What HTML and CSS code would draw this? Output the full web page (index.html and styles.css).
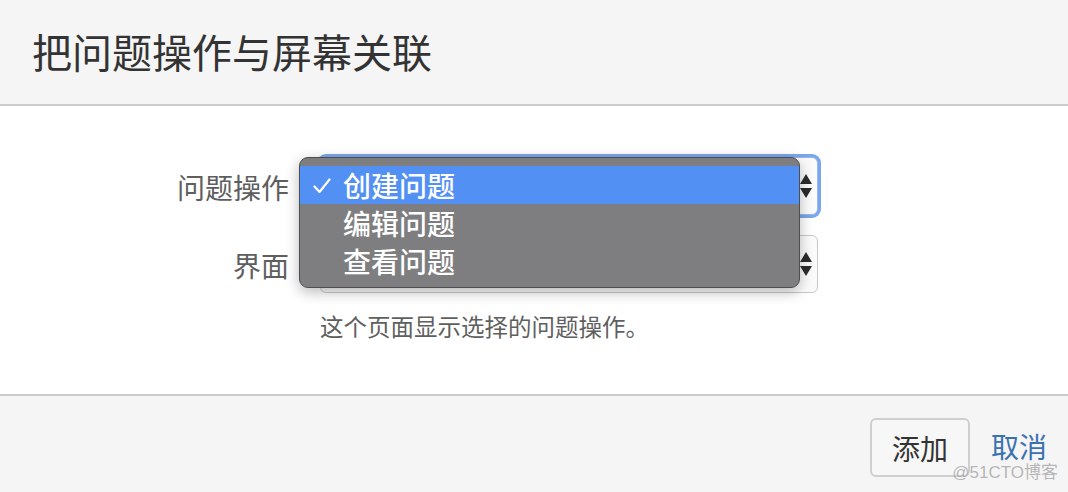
FILE: index.html
```html
<!DOCTYPE html>
<html lang="zh-CN">
<head>
<meta charset="utf-8">
<title>把问题操作与屏幕关联</title>
<link rel="stylesheet" href="styles.css">
</head>
<body>
<div class="dialog">
  <header class="dlg-header">
    <h2 class="dlg-title">把问题操作与屏幕关联</h2>
  </header>
  <main class="dlg-body">
    <div class="form">
      <label class="lbl">问题操作</label>
      <div class="field field-top">
        <div class="select focused">
          <svg class="arrows" width="12" height="26" viewBox="0 0 12 26"><path d="M0 11 L6 1 L12 11 Z M0 15 L12 15 L6 25 Z" fill="#2b2b2b"/></svg>
        </div>
        <ul class="popup">
          <li class="opt active"><svg class="check" width="18" height="16" viewBox="0 0 18 16"><path d="M1.5 8.5 L6.5 14 L16.5 1.5" fill="none" stroke="#fff" stroke-width="2.2" stroke-linecap="round" stroke-linejoin="round"/></svg><span>创建问题</span></li>
          <li class="opt"><span>编辑问题</span></li>
          <li class="opt"><span>查看问题</span></li>
        </ul>
      </div>
      <label class="lbl">界面</label>
      <div class="field">
        <div class="select">
          <svg class="arrows" width="12" height="26" viewBox="0 0 12 26"><path d="M0 11 L6 1 L12 11 Z M0 15 L12 15 L6 25 Z" fill="#2b2b2b"/></svg>
        </div>
        <div class="help">这个页面显示选择的问题操作。</div>
      </div>
    </div>
  </main>
  <footer class="dlg-footer">
    <button class="btn">添加</button>
    <a class="cancel" href="#">取消</a>
    <span class="watermark">@51CTO博客</span>
  </footer>
</div>
</body>
</html>
```

FILE: styles.css
```css
* { box-sizing: border-box; }
html, body { margin: 0; padding: 0; }
body {
  width: 1068px;
  height: 492px;
  overflow: hidden;
  font-family: "Noto Sans CJK SC", "Liberation Sans", sans-serif;
  background: #fff;
  color: #333;
}
.dialog {
  position: relative;
  display: flex;
  flex-direction: column;
  height: 492px;
}
.dlg-header {
  height: 106px;
  background: #f5f5f5;
  border-bottom: 2px solid #cccccc;
  display: flex;
  align-items: center;
  padding-left: 32px;
}
.dlg-title {
  margin: 0;
  font-size: 40px;
  font-weight: 400;
  line-height: 1;
  color: #333;
  padding-bottom: 2px;
}
.dlg-body {
  height: 288px;
  padding-top: 51px;
}
.form {
  display: grid;
  grid-template-columns: 289px 498px;
  column-gap: 31px;
  row-gap: 20px;
}
.lbl {
  text-align: right;
  font-size: 28px;
  line-height: 58px;
  height: 58px;
  color: #5e5e5e;
  padding-top: 1px;
}
.field {
  position: relative;
}
.field-top {
  z-index: 5;
}
.select {
  height: 58px;
  border: 1px solid #c9c9c9;
  border-radius: 6px;
  background: #fbfbfb;
  display: flex;
  align-items: center;
  justify-content: flex-end;
  padding-right: 5px;
}
.select.focused {
  border-color: #9bb6df;
  box-shadow: 0 0 0 3px #78a6ef;
}
.arrows { display: block; }
.popup {
  position: absolute;
  z-index: 10;
  left: -21px;
  top: 0;
  width: 501px;
  height: 131px;
  margin: 0;
  padding: 8px 0 0;
  list-style: none;
  background: #7e7e80;
  border: 1px solid #4e4e50;
  border-radius: 9px;
  box-shadow: 0 4px 14px rgba(0,0,0,0.28);
}
.opt {
  height: 38px;
  display: flex;
  align-items: center;
  padding-left: 43px;
  font-size: 28px;
  font-weight: 500;
  line-height: 1;
  color: #ffffff;
  position: relative;
}
.opt.active {
  background: #5290f3;
}
.check {
  position: absolute;
  left: 13px;
  top: 12px;
}
.help {
  margin-top: 17px;
  font-size: 23.5px;
  line-height: 32px;
  color: #5f5f5f;
}
.dlg-footer {
  flex: 1;
  background: #f5f5f5;
  border-top: 2px solid #cccccc;
  display: flex;
  align-items: flex-start;
  justify-content: flex-end;
  padding: 22px 21px 0 0;
  gap: 21px;
}
.btn {
  width: 100px;
  height: 59px;
  border: 2px solid #cfcfcf;
  border-radius: 6px;
  background: #f7f7f7;
  font-family: "Noto Sans CJK SC", "Liberation Sans", sans-serif;
  font-size: 28px;
  color: #333;
  padding: 0;
  line-height: 1;
}
.cancel {
  align-self: flex-start;
  margin-top: 14px;
  font-size: 28px;
  line-height: 28px;
  color: #3a72b0;
  text-decoration: none;
}
.watermark {
  position: absolute;
  right: 10px;
  bottom: 11px;
  font-family: "Liberation Sans", "Noto Sans CJK SC", sans-serif;
  font-size: 17px;
  line-height: 17px;
  color: rgba(160,160,160,0.75);
}
```
